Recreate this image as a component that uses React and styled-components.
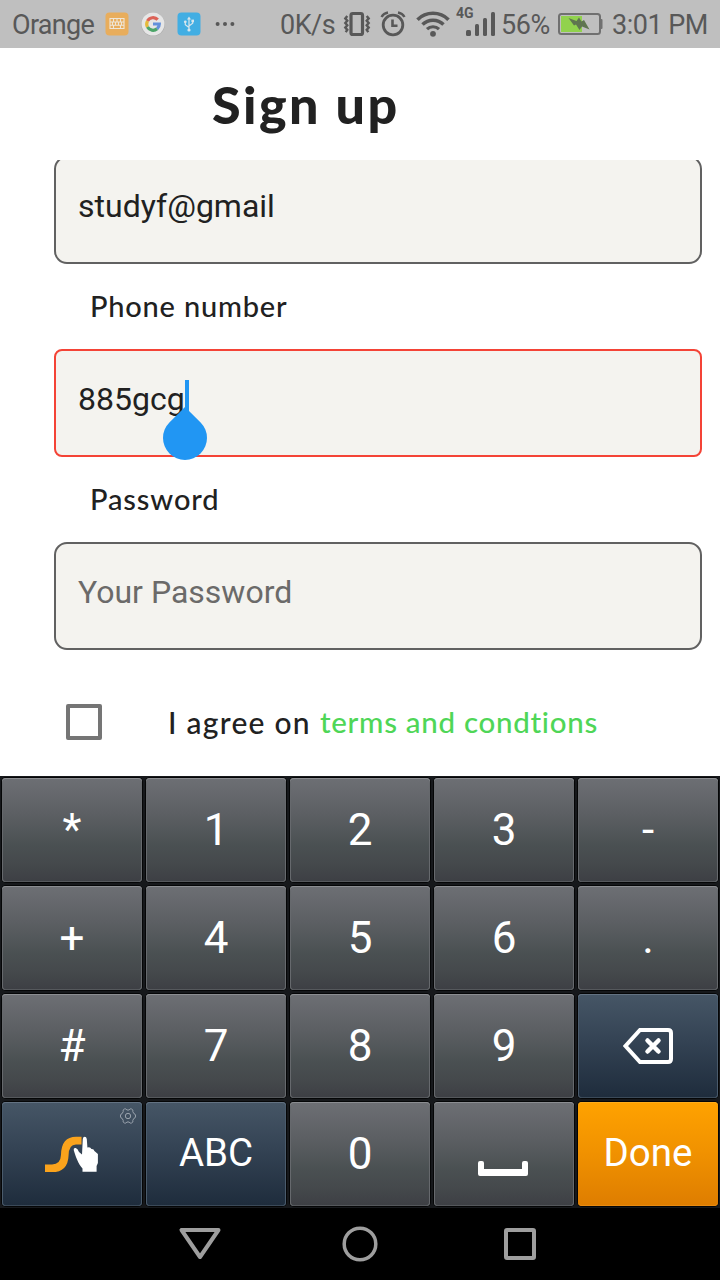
import React from "react";
import styled, { createGlobalStyle } from "styled-components";

const GlobalStyle = createGlobalStyle`
  * { box-sizing: border-box; }
  body { margin: 0; background: #fff; }
  svg { display: block; flex: none; }
`;

const Screen = styled.div`
  width: 720px;
  height: 1280px;
  display: flex;
  flex-direction: column;
  overflow: hidden;
  background: #fff;
  font-family: Roboto, sans-serif;
  color: #212121;
`;

const StatusBar = styled.div`
  height: 48px;
  flex: none;
  display: flex;
  align-items: center;
  padding-left: 12px;
  background: #bfbfbf;
  color: #585858;
`;

const StatusItem = styled.div`
  width: ${(p) => p.$width}px;
  margin-left: ${(p) => p.$gap || 0}px;
  flex: none;
`;

const StatusText = styled(StatusItem)`
  font-size: 27px;
  line-height: 48px;
  height: 48px;
  padding-top: 1px;
  white-space: nowrap;
  letter-spacing: ${(p) => p.$spacing || 0}px;
`;

const Header = styled.header`
  height: 112px;
  flex: none;
  padding: 26px 0 0 212px;
`;

const Title = styled.h1`
  margin: 0;
  font: 900 52px/60px Lato, sans-serif;
  letter-spacing: 2.4px;
  white-space: nowrap;
`;

const Form = styled.main`
  height: 616px;
  flex: none;
  overflow: hidden;
  padding: 0 18px 0 54px;
`;

const Field = styled.div`
  height: 108px;
  margin-top: ${(p) => (p.$scrolled ? -4 : 0)}px;
  display: flex;
  align-items: center;
  padding: 0 22px 8px;
  border: 2px solid ${(p) => (p.$error ? "#f44336" : "#616161")};
  border-radius: ${(p) => (p.$error ? 8 : 13)}px;
  background: #f4f3ef;
  font-size: 32px;
  line-height: 40px;
  white-space: nowrap;
  color: ${(p) => (p.$placeholder ? "#6b6a69" : "#212121")};
`;

const Value = styled.span`
  position: relative;
`;

const Caret = styled.span`
  position: absolute;
  left: 107px;
  top: 1px;
  width: 4px;
  height: 36px;
  background: #2196f3;
`;

const Handle = styled.svg`
  position: absolute;
  left: 85px;
  top: 28px;
`;

const Label = styled.div`
  height: 85px;
  padding-left: 36px;
  font: 500 29px/83px Lato, sans-serif;
  letter-spacing: ${(p) => p.$spacing}px;
  white-space: nowrap;
`;

const AgreeRow = styled.div`
  display: flex;
  align-items: center;
  height: 144px;
  padding-left: 12px;
`;

const Checkbox = styled.span`
  width: 36px;
  height: 36px;
  border: 4px solid #757575;
  border-radius: 2px;
`;

const AgreeText = styled.span`
  width: ${(p) => p.$width}px;
  margin-left: ${(p) => p.$gap || 0}px;
  font: 500 ${(p) => (p.$link ? 29.5 : 30)}px/40px Lato, sans-serif;
  letter-spacing: ${(p) => p.$spacing}px;
  white-space: nowrap;
  color: ${(p) => (p.$link ? "#4fd657" : "#212121")};
`;

const Keyboard = styled.div`
  height: 432px;
  flex: none;
  display: grid;
  grid-template-columns: repeat(5, 140px);
  grid-template-rows: repeat(4, 104px);
  gap: 4px;
  padding: 2px;
  background: #16181b;
`;

const keyFill = {
  normal: "linear-gradient(#6d6f74, #5c5f63 35%, #4a5052 65%, #45494c 82%, #3d3f44)",
  special: "linear-gradient(#465666, #344354 45%, #1e2c3c)",
  accent: "linear-gradient(#ffa200, #f09100 50%, #de7d00)",
};

const keyEdge = {
  normal: "inset 0 1px #8b8d91, inset 1px 0 #66696d, inset -1px 0 #66696d, inset 0 -1px #55585c",
  special: "inset 0 1px #637282, inset 1px 0 #4a5b6c, inset -1px 0 #4a5b6c, inset 0 -1px #3b4a59",
  accent: "inset 0 1px #ffad1c, inset 0 -1px #e98b10",
};

const Key = styled.button`
  position: relative;
  display: flex;
  align-items: center;
  justify-content: center;
  padding: 0 0 ${(p) => (p.$word ? 2 : 0)}px;
  border: 0;
  border-radius: 4px;
  background: ${(p) => keyFill[p.$kind || "normal"]};
  box-shadow: ${(p) => keyEdge[p.$kind || "normal"]}, 0 0 0 1px #050607;
  color: #fff;
  font: 400 ${(p) => (p.$word ? 38.5 : 44)}px/54px Roboto, sans-serif;
`;

const GearMark = styled.svg`
  position: absolute;
  top: 6px;
  right: 6px;
`;

const NavBar = styled.nav`
  height: 72px;
  flex: none;
  display: flex;
  align-items: center;
  justify-content: center;
  gap: 112px;
  background: #000;
`;

const KeyboardBadge = () => (
  <svg width="24" height="24" viewBox="0 0 24 24">
    <rect x=".5" y=".5" width="23" height="23" rx="4" fill="#e8ad5c" />
    <path d="M5 6.5h14v10H5zM5 10h14M5 13.2h14M8.5 6.5V10M12 6.5V10M15.5 6.5V10M7.5 10v3.2M10.5 10v3.2M13.5 10v3.2M16.5 10v3.2M8.5 13.2v3.3M15.5 13.2v3.3" fill="none" stroke="#eee6d8" strokeWidth="1.1" />
  </svg>
);

const GoogleBadge = () => (
  <svg width="24" height="24" viewBox="0 0 24 24">
    <circle cx="12" cy="12.4" r="11.8" fill="#a8a8a8" />
    <circle cx="12" cy="12" r="11.5" fill="#e6e6e6" />
    <g fill="none" strokeWidth="3.2">
      <path d="M16.7 7.7A6.3 6.3 0 0 0 6.5 9" stroke="#dc6257" />
      <path d="M6.5 9a6.3 6.3 0 0 0 0 6" stroke="#e5ba3a" />
      <path d="M6.5 15a6.3 6.3 0 0 0 9.6 1.8" stroke="#4ba568" />
      <path d="M12 12h6.3a6.3 6.3 0 0 1-2.2 4.8" stroke="#6390db" />
    </g>
  </svg>
);

const UsbBadge = () => (
  <svg width="24" height="24" viewBox="0 0 24 24">
    <rect x=".5" y=".5" width="23" height="23" rx="4" fill="#42aee3" />
    <path d="M12 7v11M12 15.5l-3.7-2.8V9.5M12 14l3.7-2.8V8.8" fill="none" stroke="#d8e6ed" strokeWidth="1.2" />
    <path d="M12 4.5l2 3h-4z" fill="#d8e6ed" />
    <circle cx="12" cy="18" r="1.6" fill="#d8e6ed" />
    <circle cx="8.3" cy="9.8" r="1.4" fill="#d8e6ed" />
    <rect x="14.4" y="7.6" width="2.6" height="2.6" fill="#d8e6ed" />
  </svg>
);

const Dots = () => (
  <svg width="20" height="6" viewBox="0 0 20 6" fill="#585858">
    <circle cx="2.6" cy="3" r="2" />
    <circle cx="10" cy="3" r="2" />
    <circle cx="17.4" cy="3" r="2" />
  </svg>
);

const Vibrate = () => (
  <svg width="28" height="26" viewBox="0 0 28 26" fill="none" stroke="#585858">
    <rect x="8" y="2.500" width="11.500" height="21" rx="1.8" strokeWidth="3.200" />
    <path d="M4.3 5L2.3 7.4l2 2.3-2 2.3 2 2.3-2 2.3 2 2.3-1.6 2.2M23.7 5l2 2.4-2 2.3 2 2.3-2 2.3 2 2.3-2 2.3 1.6 2.2" strokeWidth="2.4" />
  </svg>
);

const Alarm = () => (
  <svg width="26" height="26" viewBox="0 0 26 26" fill="none" stroke="#585858">
    <circle cx="13" cy="14" r="9.8" strokeWidth="2.8" />
    <path d="M12.5 8.5v6.2h5" strokeWidth="2.6" />
    <path d="M1.5 6Q3.5 2.4 8 1.5M24.5 6Q22.5 2.4 18 1.5" strokeWidth="2.4" />
  </svg>
);

const Wifi = () => (
  <svg width="34" height="26" viewBox="0 0 34 26" fill="none" stroke="#585858">
    <path d="M1.5 8.7a22 22 0 0 1 31 0" strokeWidth="3.6" />
    <path d="M6.5 13.5a15 15 0 0 1 21 0" strokeWidth="3.5" />
    <path d="M11 18.2a8.6 8.6 0 0 1 12 0" strokeWidth="3.2" />
    <circle cx="17" cy="22.8" r="2.9" fill="#585858" stroke="none" />
  </svg>
);

const SignalBox = styled.div`
  display: flex;
  align-items: flex-end;
  gap: 4px;
  width: 40px;
  height: 30px;
  padding-left: 10px;
  position: relative;
  margin-top: -6px;
`;

const SignalBar = styled.i`
  width: ${(p) => p.$width || 4}px;
  height: ${(p) => p.$height}px;
  border-radius: 1.5px;
  background: #585858;
`;

const Network = styled.b`
  position: absolute;
  left: 0;
  top: 0;
  font-size: 14px;
  line-height: 14px;
`;

const Battery = () => (
  <svg width="45" height="22" viewBox="0 0 45 22">
    <path d="M42 6h1.5q1 0 1 1v8q0 1-1 1H42z" fill="#707070" />
    <rect x="1" y="1" width="41" height="20" rx="2.5" fill="none" stroke="#707070" strokeWidth="2" />
    <rect x="3" y="3" width="21" height="16" fill="#91d24d" />
    <path d="M10.5 5l8 3 2.5-3.5 2.500 4 2.500-1.500 5.500 9.500-7.500-3-2.500 3.500-3.500-5.500-2 1z" fill="#5f7550" />
  </svg>
);

const Backspace = () => (
  <svg width="50" height="36" viewBox="0 0 50 36" fill="none" stroke="#fff">
    <path d="M17 2h28q3 0 3 3v26q0 3-3 3H17L2.5 18z" strokeWidth="4" />
    <path d="M24.5 12.5l11 11M35.5 12.5l-11 11" strokeWidth="4.5" strokeLinecap="round" />
  </svg>
);

const SwypeLogo = () => (
  <svg width="54" height="37" viewBox="0 0 54 37">
    <path d="M0 32.300h7C16 32.300 19.500 27 19.800 19 20 9 24 4.600 31 4.600h5.500" fill="none" stroke="#fba31c" strokeWidth="7.600" />
    <path d="M37.8 3Q38 .7 39.7 .7T41.800 3l.6 8.500q3-1 4 1.500 2.500-.3 3 2l3.500 3v9l-1.300 3v5.800H37.500v-3.300c-4.500-5-6.800-12-8.800-18.500q-.2-2.500 2-2 2 .7 3.300 4l3 2.500z" fill="#fff" />
  </svg>
);

const Gear = () => (
  <GearMark width="16" height="16" viewBox="0 0 16 16" fill="none" stroke="#9aa3ad" strokeWidth="1">
    <path d="M4.4 1q1.600-.8 2.500 1h2.200q.9-1.800 2.500-1 2 .9 1.200 2.600l1 1.900Q15.600 5.800 15.600 8t-1.800 2.500l-1 1.900q.8 1.700-1.200 2.600-1.600.8-2.500-1H6.900q-.9 1.800-2.500 1-2-.9-1.200-2.600l-1-1.900Q.4 10.200.4 8t1.800-2.500l1-1.900Q2.400 1.900 4.400 1z" />
    <circle cx="8" cy="8" r="2.7" />
  </GearMark>
);

const SpaceMark = styled.span`
  width: 50px;
  height: 15px;
  margin: 28px 2px 0 0;
`;

const Space = () => (
  <SpaceMark>
    <svg width="50" height="15" viewBox="0 0 50 15">
      <path d="M0 2q0-2 2-2h2q2 0 2 2v6h38V2q0-2 2-2h2q2 0 2 2v11q0 2-2 2H2q-2 0-2-2z" fill="#fff" />
    </svg>
  </SpaceMark>
);

const keys = [
  ["*"], ["1"], ["2"], ["3"], ["-"],
  ["+"], ["4"], ["5"], ["6"], ["."],
  ["#"], ["7"], ["8"], ["9"], [<Backspace />, "special"],
  [<><Gear /><SwypeLogo /></>, "special"], ["ABC", "special", true], ["0"], [<Space />], ["Done", "accent", true],
];

export default function App() {
  return (
    <Screen>
      <GlobalStyle />
      <StatusBar>
        <StatusText $width={93} $spacing={-0.7}>Orange</StatusText>
        <StatusItem $width={24}><KeyboardBadge /></StatusItem>
        <StatusItem $width={24} $gap={12}><GoogleBadge /></StatusItem>
        <StatusItem $width={24} $gap={12}><UsbBadge /></StatusItem>
        <StatusItem $width={20} $gap={14}><Dots /></StatusItem>
        <StatusText $width={56} $gap={45} $spacing={-0.5}>0K/s</StatusText>
        <StatusItem $width={28} $gap={7}><Vibrate /></StatusItem>
        <StatusItem $width={26} $gap={9}><Alarm /></StatusItem>
        <StatusItem $width={34} $gap={10}><Wifi /></StatusItem>
        <StatusItem $width={40} $gap={6}>
          <SignalBox>
            <Network>4G</Network>
            <SignalBar $width={5} $height={6} />
            <SignalBar $height={12} />
            <SignalBar $height={18} />
            <SignalBar $height={24} />
          </SignalBox>
        </StatusItem>
        <StatusText $width={50} $gap={5} $spacing={-0.4}>56%</StatusText>
        <StatusItem $width={45} $gap={7}><Battery /></StatusItem>
        <StatusText $width={98} $gap={9} $spacing={-0.5}>3:01 PM</StatusText>
      </StatusBar>
      <Header><Title>Sign up</Title></Header>
      <Form>
        <Field $scrolled>studyf@gmail</Field>
        <Label $spacing={0.8}>Phone number</Label>
        <Field $error>
          <Value>
            885gcg
            <Caret />
            <Handle width="44" height="53" viewBox="0 0 44 53">
              <path d="M22 0L37.6 15.4a22 22 0 1 1-31.2 0z" fill="#2196f3" />
            </Handle>
          </Value>
        </Field>
        <Label $spacing={0.9}>Password</Label>
        <Field $placeholder>Your Password</Field>
        <AgreeRow>
          <Checkbox />
          <AgreeText $gap={66} $width={152} $spacing={1.25}>I agree on</AgreeText>
          <AgreeText $link $width={290} $spacing={0.7}>terms and condtions</AgreeText>
        </AgreeRow>
      </Form>
      <Keyboard>
        {keys.map(([content, kind, word], i) => (
          <Key key={i} $kind={kind} $word={word}>{content}</Key>
        ))}
      </Keyboard>
      <NavBar>
        <svg width="48" height="36" viewBox="0 0 48 36" fill="none" stroke="#9e9e9e" strokeWidth="4" strokeLinejoin="round">
          <path d="M5.5 4h37L24 31z" />
        </svg>
        <svg width="48" height="36" viewBox="0 0 48 36" fill="none" stroke="#9e9e9e" strokeWidth="3.5">
          <circle cx="24" cy="18" r="15.8" />
        </svg>
        <svg width="48" height="36" viewBox="0 0 48 36" fill="none" stroke="#9e9e9e" strokeWidth="4">
          <rect x="10" y="4" width="28" height="28" rx="1" />
        </svg>
      </NavBar>
    </Screen>
  );
}
